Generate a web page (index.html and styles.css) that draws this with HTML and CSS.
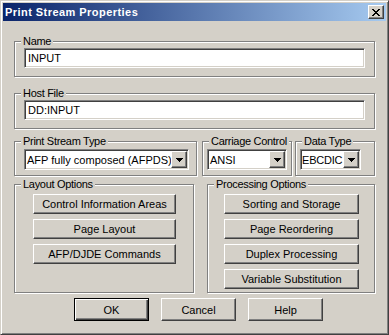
FILE: index.html
```html
<!DOCTYPE html>
<html lang="en">
<head>
    <meta charset="UTF-8">
    <title>Print Stream Properties</title>
    <link rel="stylesheet" href="styles.css">
</head>
<body>
    <div class="window">
        <div class="titlebar">
            <span class="title">Print Stream Properties</span>
            <button class="close-btn" aria-label="Close">
                <svg width="8" height="7" viewBox="0 0 8 7" shape-rendering="crispEdges">
                    <path fill="#000" d="M0 0h2v1H0z M6 0h2v1H6z M1 1h2v1H1z M5 1h2v1H5z M2 2h4v1H2z M3 3h2v1H3z M2 4h4v1H2z M1 5h2v1H1z M5 5h2v1H5z M0 6h2v1H0z M6 6h2v1H6z"/>
                </svg>
            </button>
        </div>

        <div class="content">
            <div class="group group-name">
                <span class="group-label">Name</span>
                <input class="field" type="text" value="INPUT">
            </div>

            <div class="group group-host">
                <span class="group-label">Host File</span>
                <input class="field" type="text" value="DD:INPUT">
            </div>

            <div class="row">
                <div class="group group-type">
                    <span class="group-label">Print Stream Type</span>
                    <div class="combo">
                        <span class="combo-value">AFP fully composed (AFPDS)</span>
                        <span class="combo-arrow">
                            <svg width="7" height="4" viewBox="0 0 7 4" shape-rendering="crispEdges"><path fill="#000" d="M0 0h7v1H0z M1 1h5v1H1z M2 2h3v1H2z M3 3h1v1H3z"/></svg>
                        </span>
                    </div>
                </div>
                <div class="group group-carriage">
                    <span class="group-label">Carriage Control</span>
                    <div class="combo">
                        <span class="combo-value">ANSI</span>
                        <span class="combo-arrow">
                            <svg width="7" height="4" viewBox="0 0 7 4" shape-rendering="crispEdges"><path fill="#000" d="M0 0h7v1H0z M1 1h5v1H1z M2 2h3v1H2z M3 3h1v1H3z"/></svg>
                        </span>
                    </div>
                </div>
                <div class="group group-data">
                    <span class="group-label">Data Type</span>
                    <div class="combo combo-small">
                        <span class="combo-value">EBCDIC</span>
                        <span class="combo-arrow">
                            <svg width="7" height="4" viewBox="0 0 7 4" shape-rendering="crispEdges"><path fill="#000" d="M0 0h7v1H0z M1 1h5v1H1z M2 2h3v1H2z M3 3h1v1H3z"/></svg>
                        </span>
                    </div>
                </div>
            </div>

            <div class="row row-options">
                <div class="group group-layout">
                    <span class="group-label">Layout Options</span>
                    <button class="btn opt-btn">Control Information Areas</button>
                    <button class="btn opt-btn">Page Layout</button>
                    <button class="btn opt-btn">AFP/DJDE Commands</button>
                </div>
                <div class="group group-processing">
                    <span class="group-label">Processing Options</span>
                    <button class="btn opt-btn">Sorting and Storage</button>
                    <button class="btn opt-btn">Page Reordering</button>
                    <button class="btn opt-btn">Duplex Processing</button>
                    <button class="btn opt-btn">Variable Substitution</button>
                </div>
            </div>

            <div class="actions">
                <button class="btn action-btn default">OK</button>
                <button class="btn action-btn">Cancel</button>
                <button class="btn action-btn">Help</button>
            </div>
        </div>
    </div>
</body>
</html>
```

FILE: styles.css
```css
/* Windows 2000 classic dialog look */
* {
    box-sizing: border-box;
}

body {
    margin: 0;
    font-family: 'Liberation Sans', Arial, sans-serif;
    font-size: 11px;
    color: #000;
    background-color: #d4d0c8;
}

.window {
    width: 389px;
    height: 335px;
    padding: 2px;
    background-color: #d4d0c8;
    border: 1px solid;
    border-color: #d4d0c8 #404040 #404040 #d4d0c8;
    box-shadow: inset 1px 1px 0 #fff, inset -1px -1px 0 #808080;
    display: flex;
    flex-direction: column;
}

.titlebar {
    height: 18px;
    padding: 0 2px;
    display: flex;
    align-items: center;
    justify-content: space-between;
    background: linear-gradient(to right, #0a246a, #a6caf0);
    color: #fff;
}

.title {
    font-weight: bold;
    letter-spacing: 0.45px;
}

.close-btn {
    width: 16px;
    height: 14px;
    padding: 0;
    display: flex;
    align-items: center;
    justify-content: center;
    background-color: #d4d0c8;
    border: 1px solid;
    border-color: #fff #404040 #404040 #fff;
    box-shadow: inset -1px -1px 0 #808080;
}

.content {
    padding: 20px 11px 0;
    display: flex;
    flex-direction: column;
}

/* etched group box, --pad is its left padding */
.group {
    --pad: 9px;
    padding-left: var(--pad);
    border: 1px solid #808080;
    box-shadow: 1px 1px 0 #fff, inset 1px 1px 0 #fff;
    display: flex;
    flex-direction: column;
}

.group-label {
    align-self: flex-start;
    margin: -7px 0 0 calc(6px - var(--pad));
    padding: 0 2px;
    line-height: 13px;
    letter-spacing: -0.3px;
    background-color: #d4d0c8;
    white-space: nowrap;
}

.group-name,
.group-host {
    padding-right: 9px;
    padding-bottom: 8px;
}

.group-host {
    margin-top: 16px;
}

.field {
    width: 100%;
    height: 20px;
    margin: 0;
    padding: 0 3px;
    font: inherit;
    color: #000;
    background-color: #fff;
    border: 1px solid;
    border-color: #808080 #fff #fff #808080;
    box-shadow: inset 1px 1px 0 #404040, inset -1px -1px 0 #d4d0c8;
    outline: none;
}

.row {
    display: flex;
    margin-top: 12px;
}

.group-type {
    width: 183px;
    margin-right: 5px;
    padding-right: 7px;
    padding-bottom: 5px;
}

.group-carriage {
    --pad: 4px;
    width: 90px;
    margin-right: 3px;
    padding-right: 4px;
    padding-bottom: 5px;
}

.group-data {
    --pad: 4px;
    width: 80px;
    padding-right: 4px;
    padding-bottom: 5px;
}

.combo {
    height: 21px;
    margin-top: 1px;
    padding: 1px;
    display: flex;
    align-items: stretch;
    background-color: #fff;
    border: 1px solid;
    border-color: #808080 #fff #fff #808080;
    box-shadow: inset 1px 1px 0 #404040, inset -1px -1px 0 #d4d0c8;
}

.combo-small {
    width: 61px;
}

.combo-value {
    flex: 1;
    padding-left: 1px;
    display: flex;
    align-items: center;
    white-space: nowrap;
    overflow: hidden;
}

.combo-small .combo-value {
    padding-left: 0;
    letter-spacing: -0.2px;
}

.combo-arrow {
    width: 16px;
    flex-shrink: 0;
    display: flex;
    align-items: center;
    justify-content: center;
    background-color: #d4d0c8;
    border: 1px solid;
    border-color: #fff #404040 #404040 #fff;
    box-shadow: inset -1px -1px 0 #808080;
}

.row-options {
    margin-top: 8px;
}

.group-layout {
    --pad: 18px;
    width: 180px;
    margin-right: 13px;
    padding-right: 17px;
    padding-bottom: 3px;
}

.group-processing {
    --pad: 16px;
    width: 168px;
    padding-right: 15px;
    padding-bottom: 3px;
}

/* raised push button */
.btn {
    margin: 0;
    padding: 0;
    font: inherit;
    color: #000;
    background-color: #d4d0c8;
    border: 1px solid;
    border-color: #fff #404040 #404040 #fff;
    box-shadow: inset -1px -1px 0 #808080;
    white-space: nowrap;
}

.opt-btn {
    height: 20px;
    margin-top: 5px;
}

.group-label + .opt-btn {
    margin-top: 3px;
}

.actions {
    display: flex;
    gap: 12px;
    margin-top: 5px;
    padding-left: 60px;
}

.action-btn {
    width: 75px;
    height: 23px;
}

.action-btn.default {
    border-color: #000;
    box-shadow: inset 1px 1px 0 #fff, inset -1px -1px 0 #404040, inset -2px -2px 0 #808080;
}
```
